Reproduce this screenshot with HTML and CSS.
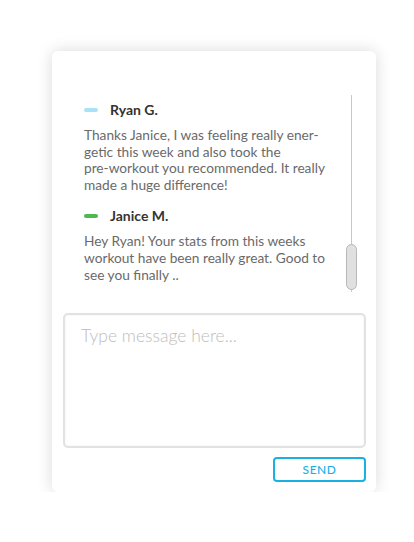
FILE: index.html
```html
<!DOCTYPE html>
<html>
<head>
<meta charset="utf-8">
<link rel="stylesheet" href="styles.css">
</head>
<body>
<div class="card">
  <div class="thread">
    <div class="messages">
      <div class="msg">
        <div class="head"><span class="dash dash-blue"></span><span class="name">Ryan G.</span></div>
        <p class="text">Thanks Janice, I was feeling really ener-<br>getic this week and also took the <span class="nw">pre-workout</span> you recommended. It really made a huge difference!</p>
      </div>
      <div class="msg">
        <div class="head"><span class="dash dash-green"></span><span class="name">Janice M.</span></div>
        <p class="text">Hey Ryan! Your stats from this weeks workout have been really great. Good to see you finally ..</p>
      </div>
    </div>
    <div class="scrollbar"><div class="track"></div><div class="thumb"></div></div>
  </div>
  <textarea class="input" placeholder="Type message here..."></textarea>
  <div class="actions"><button class="send">SEND</button></div>
</div>
</body>
</html>
```
FILE: styles.css
```css
html, body {
  margin: 0;
  padding: 0;
  background: #fff;
  font-family: Lato, "Open Sans", sans-serif;
}
body {
  padding: 51px 38px 0 52px;
}
.card {
  width: 324px;
  height: 441px;
  box-sizing: border-box;
  background: #fff;
  border-radius: 6px;
  box-shadow: 0 0 16px rgba(0,0,0,0.15);
  padding: 44px 10px 10px 11px;
  display: flex;
  flex-direction: column;
}
.thread {
  height: 198px;
  display: flex;
  padding-left: 21px;
  overflow: hidden;
}
.messages {
  width: 246px;
  padding-top: 6px;
}
.msg { margin-bottom: 14px; }
.head {
  display: flex;
  align-items: center;
  height: 17px;
  margin-bottom: 9px;
}
.dash {
  width: 14px;
  height: 4px;
  border-radius: 2px;
  margin-right: 12px;
}
.dash-blue { background: #a9e2f6; }
.dash-green { background: #4dba4d; }
.name {
  font-size: 14px;
  font-weight: 700;
  color: #333;
}
.text {
  margin: 0;
  font-size: 13.7px;
  line-height: 16.6px;
  color: #6a6a6a;
}
.nw { white-space: nowrap; }
.scrollbar {
  position: relative;
  width: 11px;
  margin-left: 16px;
  display: flex;
  justify-content: center;
}
.track {
  width: 1px;
  height: 100%;
  background: #c8c8c8;
}
.thumb {
  position: absolute;
  left: 0;
  bottom: 2px;
  width: 9px;
  height: 44px;
  border: 1px solid #b8b8b8;
  border-radius: 6px;
  background: #e0e0e0;
}
.input {
  margin-top: 21px;
  width: 303px;
  height: 135px;
  box-sizing: border-box;
  border: 2px solid #e2e2e2;
  border-radius: 5px;
  box-shadow: inset 0 0 2px rgba(0,0,0,0.08);
  padding: 10px 16px;
  font-family: Lato, sans-serif;
  font-weight: 300;
  font-size: 17.5px;
  resize: none;
  outline: none;
}
.input::placeholder { color: #bdbdbd; }
.actions {
  display: flex;
  justify-content: flex-end;
  margin-top: 9px;
}
.send {
  width: 93px;
  height: 25px;
  box-sizing: border-box;
  border: 2px solid #1bb0e4;
  border-radius: 4px;
  background: #fff;
  color: #1bb0e4;
  font-family: Lato, sans-serif;
  font-size: 12px;
  font-weight: 500;
  letter-spacing: 0.5px;
  padding: 0;
}
```
